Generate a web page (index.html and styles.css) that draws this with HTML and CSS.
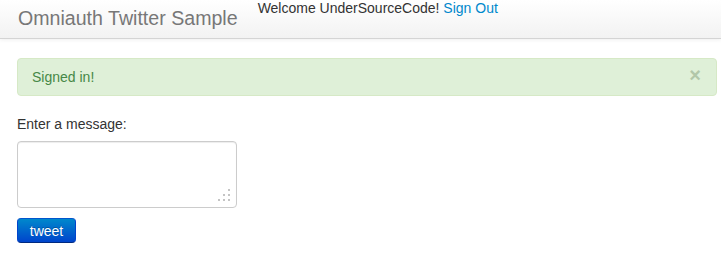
FILE: index.html
```html
<!DOCTYPE html>
<html>
<head>
<meta charset="utf-8">
<link rel="stylesheet" href="styles.css">
</head>
<body>
<div class="navbar">
  <a class="brand" href="#">Omniauth Twitter Sample</a>
  <div class="welcome">Welcome UnderSourceCode! <a href="#">Sign Out</a></div>
</div>
<div class="container">
  <div class="alert">
    <span class="close">&times;</span>
    Signed in!
  </div>
  <form class="tweet-form">
    <label class="label">Enter a message:</label>
    <div class="field">
      <textarea class="message"></textarea>
      <svg class="grip" width="12" height="12" viewBox="0 0 12 12">
        <rect x="10" y="0" width="2" height="2" fill="#c4c4c4"/>
        <rect x="5" y="5" width="2" height="2" fill="#c4c4c4"/>
        <rect x="10" y="5" width="2" height="2" fill="#c4c4c4"/>
        <rect x="0" y="10" width="2" height="2" fill="#c4c4c4"/>
        <rect x="5" y="10" width="2" height="2" fill="#c4c4c4"/>
        <rect x="10" y="10" width="2" height="2" fill="#c4c4c4"/>
      </svg>
    </div>
    <button class="btn" type="button">tweet</button>
  </form>
</div>
</body>
</html>
```
FILE: styles.css
```css
html, body {
  margin: 0;
  padding: 0;
}
body {
  font-family: "Liberation Sans", Arial, sans-serif;
  font-size: 14px;
  line-height: 20px;
  color: #333;
  background: #fff;
}
a {
  color: #0088cc;
  text-decoration: none;
}
.navbar {
  height: 38px;
  border-bottom: 1px solid #d4d4d4;
  background: linear-gradient(#ffffff, #f2f2f2);
  box-shadow: 0 1px 4px rgba(0,0,0,0.065);
  display: flex;
  align-items: flex-start;
  padding-left: 18px;
}
.brand {
  font-size: 19.6px;
  line-height: 20px;
  color: #777;
  padding-top: 8px;
}
.welcome {
  margin-left: 20px;
  line-height: 16px;
  color: #333;
}
.container {
  padding: 19px 4px 0 17px;
}
.alert {
  position: relative;
  padding: 8px 35px 8px 14px;
  background: #dff0d8;
  border: 1px solid #d6e9c6;
  border-radius: 4px;
  color: #468847;
  margin-bottom: 18px;
}
.close {
  position: absolute;
  right: 15px;
  top: 6px;
  font-size: 20px;
  font-weight: bold;
  line-height: 20px;
  color: #4c6b40;
  opacity: 0.3;
}
.tweet-form {
  display: flex;
  flex-direction: column;
  align-items: flex-start;
}
.label {
  display: block;
  margin-bottom: 7px;
}
.field {
  position: relative;
  width: 220px;
  height: 67px;
}
.message {
  box-sizing: border-box;
  width: 220px;
  height: 67px;
  margin: 0;
  border: 1px solid #ccc;
  border-radius: 4px;
  resize: none;
  display: block;
  box-shadow: inset 0 1px 1px rgba(0,0,0,0.075);
}
.grip {
  position: absolute;
  right: 7px;
  bottom: 7px;
}
.btn {
  margin-top: 10px;
  width: 59px;
  height: 25px;
  padding: 0;
  border: 1px solid #0044cc;
  border-color: #0055cc #0044cc #002a80;
  border-radius: 4px;
  background: linear-gradient(#0088cc, #0044cc);
  color: #fff;
  font-family: "Liberation Sans", Arial, sans-serif;
  font-size: 14px;
  line-height: 20px;
  text-shadow: 0 -1px 0 rgba(0,0,0,0.25);
}
```
